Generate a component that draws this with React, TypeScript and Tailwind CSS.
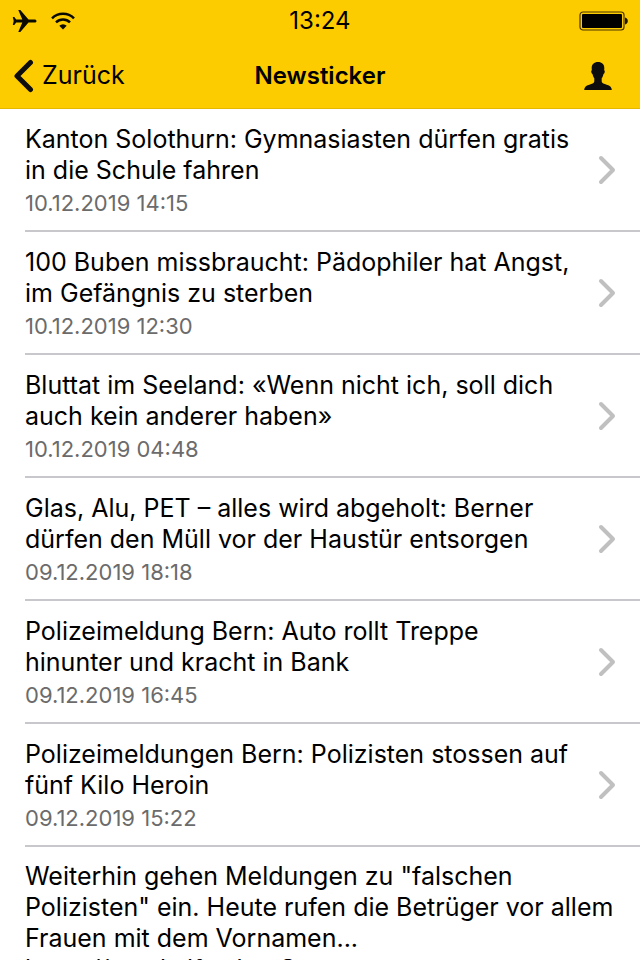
import React from "react";

type Item = { title: string[]; date?: string };

const items: Item[] = [
  { title: ["Kanton Solothurn: Gymnasiasten dürfen gratis", "in die Schule fahren"], date: "10.12.2019 14:15" },
  { title: ["100 Buben missbraucht: Pädophiler hat Angst,", "im Gefängnis zu sterben"], date: "10.12.2019 12:30" },
  { title: ["Bluttat im Seeland: «Wenn nicht ich, soll dich", "auch kein anderer haben»"], date: "10.12.2019 04:48" },
  { title: ["Glas, Alu, PET – alles wird abgeholt: Berner", "dürfen den Müll vor der Haustür entsorgen"], date: "09.12.2019 18:18" },
  { title: ["Polizeimeldung Bern: Auto rollt Treppe", "hinunter und kracht in Bank"], date: "09.12.2019 16:45" },
  { title: ["Polizeimeldungen Bern: Polizisten stossen auf", "fünf Kilo Heroin"], date: "09.12.2019 15:22" },
];

const teaser = [
  "Weiterhin gehen Meldungen zu \"falschen",
  "Polizisten\" ein. Heute rufen die Betrüger vor allem",
  "Frauen mit dem Vornamen...",
  "https://nau.ksif.vol.noS",
];

function StatusBar() {
  return (
    <div className="grid h-[42px] grid-cols-3 items-center px-3">
      <div className="flex items-center gap-3.5">
        <svg width="25" height="24" viewBox="0 0 25 24" fill="#0a0a00" aria-hidden="true">
          <path d="M24.5 12c0-1-.9-1.600-2-1.600h-6L8.300 1H6.300l4 9.400H4.200L2.300 8H.8l.9 4-.9 4h1.500l1.900-2.400h6.100L6.300 23h2l8.200-9.400h6c1.100 0 2-.6 2-1.600z" />
        </svg>
        <svg width="24" height="18" viewBox="0 0 24 18" fill="none" stroke="#0a0a00" strokeWidth="2.500" aria-hidden="true">
          <path d="M1 6.400a15.600 15.600 0 0 1 22 0" />
          <path d="M5 10.400a10 10 0 0 1 14 0" />
          <path d="M12 17.500l-3.700-3.700a5.300 5.300 0 0 1 7.400 0z" fill="#0a0a00" stroke="none" />
        </svg>
      </div>
      <time className="text-center text-2xl">13:24</time>
      <svg className="justify-self-end" width="49" height="20" viewBox="0 0 49 20" aria-hidden="true">
        <rect x="1" y="1" width="44" height="18" rx="3" fill="none" stroke="#4a3500" strokeWidth="1.200" />
        <rect x="3" y="3" width="40" height="14" rx="1" fill="#000" />
        <path d="M46 6.500c1.700.3 2.800 1.600 2.800 3.500s-1.100 3.200-2.800 3.500z" fill="#1c1500" />
      </svg>
    </div>
  );
}

function NavBar() {
  return (
    <nav className="grid grow grid-cols-3 items-center px-3 pt-0.5">
      <button type="button" className="flex items-center gap-2 text-[25px]">
        <svg width="22" height="34" viewBox="0 0 22 34" fill="none" stroke="#0d0d0d" strokeWidth="5" strokeLinecap="round" strokeLinejoin="round" aria-hidden="true">
          <path d="M18.500 3.500 5 17l13.500 13.500" />
        </svg>
        Zurück
      </button>
      <h1 className="text-center text-2xl font-semibold">Newsticker</h1>
      <button type="button" aria-label="Profil" className="justify-self-end pr-4">
        <svg width="28" height="28" viewBox="0 0 28 28" fill="#0d0d0d" aria-hidden="true">
          <path d="M14 0c4 0 6.300 2.400 6.300 6 0 .8-.1 1.500-.2 2.200.8.300.8 1.400.5 2.300-.2.800-.6 1.400-1.100 1.600-.4 2-1 3.300-1.800 4.200v3.300c.4 1.800 2.300 2.300 5 3.100 3.600 1 5 2.400 5.100 5.300H.2c.1-2.900 1.500-4.300 5.100-5.300 2.700-.8 4.600-1.300 5-3.100v-3.300c-.8-.9-1.400-2.200-1.800-4.200-.5-.2-.9-.8-1.100-1.600-.3-.9-.3-2 .5-2.300-.1-.7-.2-1.400-.2-2.200C7.700 2.400 10 0 14 0z" />
        </svg>
      </button>
    </nav>
  );
}

function Lines({ lines }: { lines: string[] }) {
  return (
    <>
      {lines.map((line) => (
        <span key={line} className="block whitespace-nowrap">{line}</span>
      ))}
    </>
  );
}

export default function App() {
  return (
    <div className="flex h-screen flex-col overflow-hidden bg-white font-['Inter',sans-serif] text-black">
      <header className="flex h-[109px] shrink-0 flex-col border-b border-[#e5b800] bg-[#fdcc00]">
        <StatusBar />
        <NavBar />
      </header>
      <ul className="min-h-0 grow overflow-hidden pl-[25px]">
        {items.map((item) => (
          <li key={item.date} className="border-b-2 border-[#c8c7cc]">
            <a href="#" className="flex items-center justify-between pr-6">
              <div className="pt-[15px] pb-2.5">
                <h2 className="text-[25px] leading-[31px]"><Lines lines={item.title} /></h2>
                <time className="block text-[22px] leading-[34px] text-[#6b6b6b]">{item.date}</time>
              </div>
              <svg className="shrink-0" width="18" height="30" viewBox="0 0 18 30" fill="none" stroke="#c0c0c0" strokeWidth="4" strokeLinecap="round" strokeLinejoin="round" aria-hidden="true">
                <path d="M3 3l12 12L3 27" />
              </svg>
            </a>
          </li>
        ))}
        <li className="pt-3.5">
          <p className="text-[25px] leading-[31px]"><Lines lines={teaser} /></p>
        </li>
      </ul>
    </div>
  );
}
